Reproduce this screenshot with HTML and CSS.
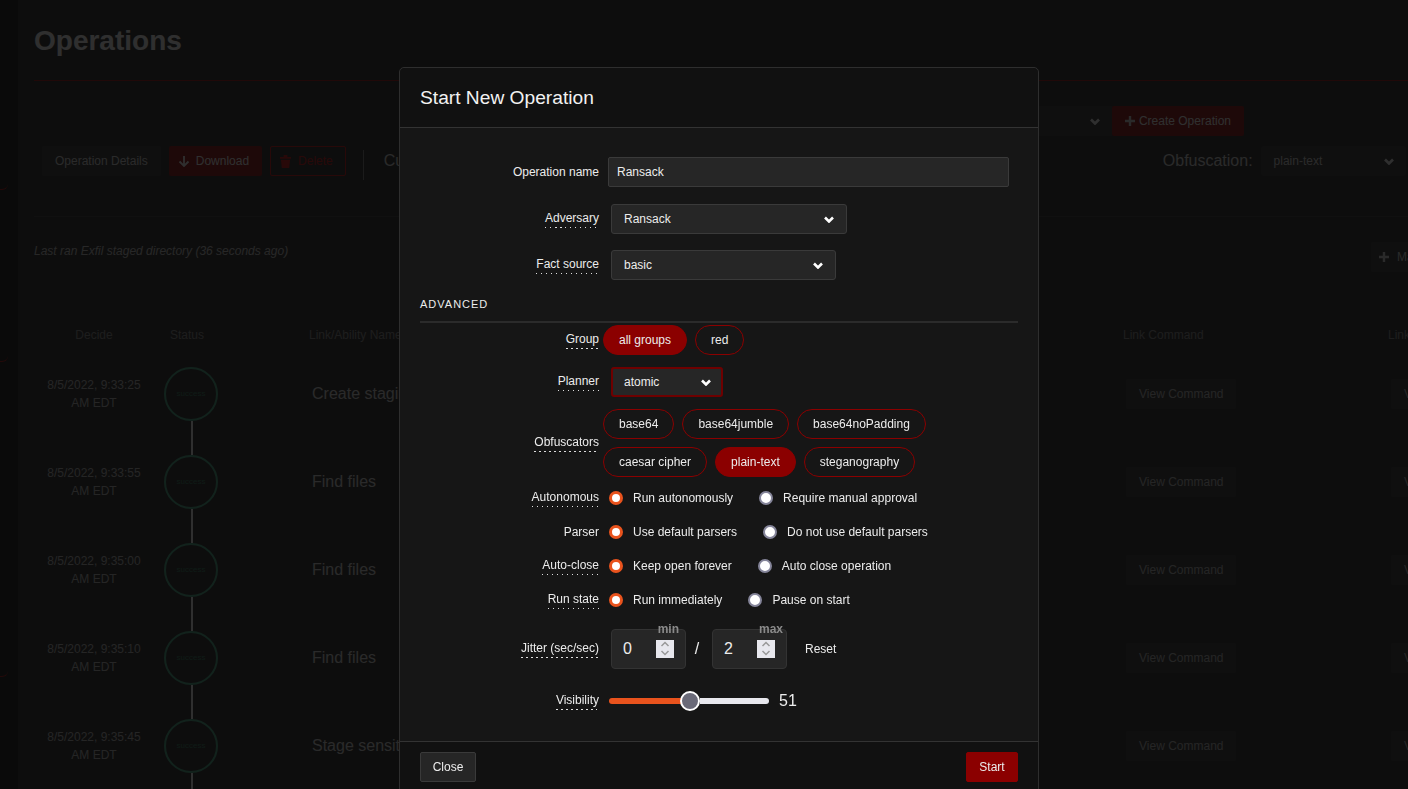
FILE: index.html
```html
<!DOCTYPE html>
<html>
<head>
    <title>Operations</title>
    <link rel="stylesheet" href="styles.css">
</head>
<body>
    <div class="page">
        <div class="sidebar">
            <div class="side-item side-a"></div>
            <div class="side-item side-b"></div>
            <div class="side-item side-c"></div>
        </div>
        <div class="main">
            <h1 class="page-title">Operations</h1>
            <div class="title-line"></div>
            <div class="top-row">
                <div class="bg-select op-select">
                    <span>Ransack - 8/5/2022</span>
                    <svg class="chev" viewBox="0 0 10 7"><path d="M1 1.5l4 4 4-4" /></svg>
                </div>
                <div class="bg-btn bg-red create-btn">
                    <svg class="plus" viewBox="0 0 10 10"><path d="M5 0v10M0 5h10" /></svg>
                    Create Operation
                </div>
            </div>
            <div class="tool-row">
                <div class="bg-btn">Operation Details</div>
                <div class="bg-btn bg-red download-btn">
                    <svg class="arrow" viewBox="0 0 12 12"><path d="M6 1v10M1.5 6.5L6 11l4.5-4.5" /></svg>
                    Download
                </div>
                <div class="bg-btn bg-outline">
                    <svg class="trash" viewBox="0 0 12 14"><path d="M0 2h4V0h4v2h4v2H0zM1 5h10l-1 9H2z" /></svg>
                    Delete
                </div>
                <div class="tool-sep"></div>
                <div class="current">Current state</div>
                <div class="obf">
                    <span class="obf-label">Obfuscation:</span>
                    <div class="bg-select obf-select">
                        <span>plain-text</span>
                        <svg class="chev" viewBox="0 0 10 7"><path d="M1 1.5l4 4 4-4" /></svg>
                    </div>
                </div>
            </div>
            <div class="soft-line"></div>
            <div class="status-row">
                <em class="last-ran">Last ran Exfil staged directory (36 seconds ago)</em>
                <div class="bg-btn manual-btn">
                    <svg class="plus" viewBox="0 0 10 10"><path d="M5 0v10M0 5h10" /></svg>
                    Manual Command
                </div>
            </div>
            <div class="tbl-head">
                <div class="center">Decide</div>
                <div class="status-head">Status</div>
                <div></div>
                <div>Link/Ability Name</div>
                <div>Link Command</div>
                <div>Link Output</div>
            </div>
            <div class="tbl-row">
                <div class="date">8/5/2022, 9:33:25<br>AM EDT</div>
                <div class="status-cell"><div class="circle">success</div><div class="connector"></div></div>
                <div></div>
                <div class="link-name">Create staging directory</div>
                <div class="cmd-cell"><div class="bg-btn">View Command</div></div>
                <div class="cmd-cell"><div class="bg-btn">View Output</div></div>
            </div>
            <div class="tbl-row">
                <div class="date">8/5/2022, 9:33:55<br>AM EDT</div>
                <div class="status-cell"><div class="circle">success</div><div class="connector"></div></div>
                <div></div>
                <div class="link-name">Find files</div>
                <div class="cmd-cell"><div class="bg-btn">View Command</div></div>
                <div class="cmd-cell"><div class="bg-btn">View Output</div></div>
            </div>
            <div class="tbl-row">
                <div class="date">8/5/2022, 9:35:00<br>AM EDT</div>
                <div class="status-cell"><div class="circle">success</div><div class="connector"></div></div>
                <div></div>
                <div class="link-name">Find files</div>
                <div class="cmd-cell"><div class="bg-btn">View Command</div></div>
                <div class="cmd-cell"><div class="bg-btn">View Output</div></div>
            </div>
            <div class="tbl-row">
                <div class="date">8/5/2022, 9:35:10<br>AM EDT</div>
                <div class="status-cell"><div class="circle">success</div><div class="connector"></div></div>
                <div></div>
                <div class="link-name">Find files</div>
                <div class="cmd-cell"><div class="bg-btn">View Command</div></div>
                <div class="cmd-cell"><div class="bg-btn">View Output</div></div>
            </div>
            <div class="tbl-row">
                <div class="date">8/5/2022, 9:35:45<br>AM EDT</div>
                <div class="status-cell"><div class="circle">success</div><div class="connector"></div></div>
                <div></div>
                <div class="link-name">Stage sensitive files</div>
                <div class="cmd-cell"><div class="bg-btn">View Command</div></div>
                <div class="cmd-cell"><div class="bg-btn">View Output</div></div>
            </div>
        </div>
    </div>

    <div class="backdrop"></div>

    <div class="modal">
        <div class="modal-head">Start New Operation</div>
        <div class="modal-body">
            <div class="field field-name">
                <div class="field-label"><span>Operation name</span></div>
                <div class="text-input">Ransack</div>
            </div>
            <div class="field field-adv">
                <div class="field-label"><span class="tip">Adversary</span></div>
                <div class="select select-adv">
                    <span>Ransack</span>
                    <svg class="chev" viewBox="0 0 10 7"><path d="M1 1.5l4 4 4-4" /></svg>
                </div>
            </div>
            <div class="field field-fact">
                <div class="field-label"><span class="tip">Fact source</span></div>
                <div class="select select-fact">
                    <span>basic</span>
                    <svg class="chev" viewBox="0 0 10 7"><path d="M1 1.5l4 4 4-4" /></svg>
                </div>
            </div>
            <div class="advanced">ADVANCED</div>
            <div class="advanced-line"></div>
            <div class="field field-group">
                <div class="field-label"><span class="tip">Group</span></div>
                <div class="pills">
                    <div class="pill pill-on">all groups</div>
                    <div class="pill">red</div>
                </div>
            </div>
            <div class="field field-planner">
                <div class="field-label"><span class="tip">Planner</span></div>
                <div class="select select-planner">
                    <span>atomic</span>
                    <svg class="chev" viewBox="0 0 10 7"><path d="M1 1.5l4 4 4-4" /></svg>
                </div>
            </div>
            <div class="field field-obf">
                <div class="field-label"><span class="tip">Obfuscators</span></div>
                <div class="pills pills-wrap">
                    <div class="pill">base64</div>
                    <div class="pill">base64jumble</div>
                    <div class="pill">base64noPadding</div>
                    <div class="pill">caesar cipher</div>
                    <div class="pill pill-on">plain-text</div>
                    <div class="pill">steganography</div>
                </div>
            </div>
            <div class="field field-radio field-auto">
                <div class="field-label"><span class="tip">Autonomous</span></div>
                <div class="radios">
                    <div class="radio-opt"><i class="radio radio-on"></i>Run autonomously</div>
                    <div class="radio-opt"><i class="radio"></i>Require manual approval</div>
                </div>
            </div>
            <div class="field field-radio">
                <div class="field-label"><span>Parser</span></div>
                <div class="radios">
                    <div class="radio-opt"><i class="radio radio-on"></i>Use default parsers</div>
                    <div class="radio-opt"><i class="radio"></i>Do not use default parsers</div>
                </div>
            </div>
            <div class="field field-radio">
                <div class="field-label"><span class="tip">Auto-close</span></div>
                <div class="radios">
                    <div class="radio-opt"><i class="radio radio-on"></i>Keep open forever</div>
                    <div class="radio-opt"><i class="radio"></i>Auto close operation</div>
                </div>
            </div>
            <div class="field field-radio">
                <div class="field-label"><span class="tip">Run state</span></div>
                <div class="radios">
                    <div class="radio-opt"><i class="radio radio-on"></i>Run immediately</div>
                    <div class="radio-opt"><i class="radio"></i>Pause on start</div>
                </div>
            </div>
            <div class="field field-jitter">
                <div class="field-label"><span class="tip">Jitter (sec/sec)</span></div>
                <div class="jitter">
                    <div class="num-box">
                        <span class="num-val">0</span>
                        <span class="num-tag">min</span>
                        <div class="spin">
                            <svg viewBox="0 0 18 18"><path d="M5.500 6L9 2.500 12.500 6M5.500 11L9 14.500 12.500 11" /></svg>
                        </div>
                    </div>
                    <span class="slash">/</span>
                    <div class="num-box">
                        <span class="num-val">2</span>
                        <span class="num-tag num-tag-max">max</span>
                        <div class="spin">
                            <svg viewBox="0 0 18 18"><path d="M5.500 6L9 2.500 12.500 6M5.500 11L9 14.500 12.500 11" /></svg>
                        </div>
                    </div>
                    <span class="reset">Reset</span>
                </div>
            </div>
            <div class="field field-vis">
                <div class="field-label"><span class="tip">Visibility</span></div>
                <div class="slider">
                    <div class="slider-fill"></div>
                    <div class="slider-thumb"></div>
                    <div class="slider-rest"></div>
                </div>
                <span class="slider-val">51</span>
            </div>
        </div>
        <div class="modal-foot">
            <div class="btn btn-close">Close</div>
            <div class="btn btn-start">Start</div>
        </div>
    </div>
</body>
</html>
```

FILE: styles.css
```css
* {
    margin: 0;
    padding: 0;
    box-sizing: border-box;
}

html, body {
    height: 100%;
    overflow: hidden;
}

body {
    background: #1f1f1f;
    color: #dbdbdb;
    font-family: "Liberation Sans", Arial, sans-serif;
    font-size: 12px;
}

/* page behind the modal */
.page {
    display: flex;
    height: 789px;
    overflow: hidden;
}

.sidebar {
    width: 18px;
    flex-shrink: 0;
    background: #0c0c0c;
}

.side-item {
    width: 8px;
    border-bottom: 1px solid #b00000;
    border-bottom-right-radius: 6px;
}

.side-a { height: 190px; }
.side-b { height: 172px; }
.side-c { height: 315px; }

.main {
    flex: 1;
    min-width: 0;
    padding: 25px 0 0 16px;
}

.page-title {
    font-size: 28px;
    line-height: 32px;
    font-weight: bold;
    color: #fff;
}

.title-line {
    height: 1px;
    margin-top: 23px;
    background: #a00000;
}

.top-row {
    display: flex;
    justify-content: flex-end;
    margin: 25px 164px 0 0;
    height: 30px;
}

.bg-select {
    display: flex;
    align-items: center;
    justify-content: space-between;
    height: 30px;
    padding: 0 12px 0 13px;
    background: #2b2b2b;
    border-radius: 3px;
    color: #dbdbdb;
}

.op-select {
    width: 320px;
    border-radius: 3px 0 0 3px;
}

.create-btn {
    border-radius: 0 3px 3px 0;
    padding: 0 14px 0 12px;
    gap: 4px;
}

.bg-btn {
    display: inline-flex;
    align-items: center;
    height: 30px;
    padding: 0 13px;
    background: #2b2b2b;
    border-radius: 2px;
    white-space: nowrap;
}

.bg-red {
    background: #8b0000;
    color: #fff;
}

.download-btn {
    padding-left: 9px;
}

.bg-outline {
    background: none;
    border: 1px solid #d00000;
    color: #d00000;
    padding: 0 12px 0 9px;
}

.tool-row {
    display: flex;
    align-items: center;
    gap: 8px;
    margin: 10px 0 0 8px;
    height: 30px;
}

.tool-row > * {
    flex-shrink: 0;
}

.tool-sep {
    width: 1px;
    height: 30px;
    margin: 8px 12px 0 9px;
    background: #777;
}

.current {
    font-size: 16px;
    width: 400px;
    white-space: nowrap;
}

.obf {
    display: flex;
    align-items: center;
    gap: 8px;
    margin-left: 371px;
}

.obf-label {
    font-size: 16px;
}

.obf-select {
    width: 145px;
}

.soft-line {
    height: 1px;
    margin-top: 40px;
    background: #333;
}

.status-row {
    display: flex;
    align-items: flex-start;
    justify-content: space-between;
    height: 30px;
    margin-top: 25px;
}

.last-ran {
    margin-top: 2px;
    line-height: 14px;
    color: #c8c8c8;
}

.manual-btn {
    flex-shrink: 0;
    gap: 8px;
    padding-left: 8px;
    margin-right: -100px;
}

.tbl-head, .tbl-row {
    display: grid;
    grid-template-columns: 120px 74px 81px 814px 265px 200px;
    width: 1554px;
}

.tbl-head {
    margin-top: 56px;
    line-height: 14px;
    color: #888;
}

.center { text-align: center; }
.status-head { padding-left: 16px; }

.tbl-row {
    height: 88px;
    color: #bbb;
}

.tbl-head + .tbl-row { margin-top: 25px; }

.date {
    height: 54px;
    padding-top: 9px;
    line-height: 18px;
    text-align: center;
}

.status-cell {
    display: flex;
    flex-direction: column;
    align-items: center;
    width: 54px;
    margin-left: 10px;
}

.circle {
    display: flex;
    align-items: center;
    justify-content: center;
    width: 54px;
    height: 54px;
    flex-shrink: 0;
    padding-bottom: 2px;
    border: 2px solid #3caa82;
    border-radius: 50%;
    font-size: 8px;
    color: #2a7a5c;
}

.connector {
    width: 2px;
    height: 34px;
    margin-left: 1px;
    background: #fff;
}

.link-name {
    display: flex;
    align-items: center;
    height: 54px;
    padding-left: 3px;
    font-size: 16px;
    color: #dbdbdb;
}

.cmd-cell {
    display: flex;
    align-items: center;
    height: 54px;
    padding-left: 3px;
}

.chev {
    width: 10px;
    height: 7px;
    fill: none;
    stroke: #fff;
    stroke-width: 2.600;
    flex-shrink: 0;
}

.plus {
    width: 10px;
    height: 10px;
    stroke: #dbdbdb;
    stroke-width: 2.400;
    flex-shrink: 0;
}

.arrow {
    width: 12px;
    height: 12px;
    margin-right: 6px;
    fill: none;
    stroke: #fff;
    stroke-width: 1.800;
}

.trash {
    width: 11px;
    height: 13px;
    margin-right: 7px;
    fill: #d00000;
}

.backdrop {
    position: fixed;
    inset: 0;
    background: rgba(10, 10, 10, 0.85);
}

/* modal */
.modal {
    position: fixed;
    top: 67px;
    left: 399px;
    width: 640px;
    height: 740px;
    display: flex;
    flex-direction: column;
    background: #161616;
    border: 1px solid #2e2e2e;
    border-radius: 5px;
    color: #ececec;
}

.modal-head {
    height: 60px;
    padding-left: 20px;
    background: #111;
    border-bottom: 1px solid #333;
    border-radius: 5px 5px 0 0;
    font-size: 19.200px;
    line-height: 59px;
    color: #f2f2f2;
}

.modal-body {
    height: 613px;
    padding: 29px 20px 0;
    flex-shrink: 0;
}

.modal-foot {
    display: flex;
    justify-content: space-between;
    flex: 1;
    padding: 10px 20px;
    background: #111;
    border-top: 1px solid #333;
}

.field {
    display: flex;
    align-items: center;
}

.field-label {
    width: 179px;
    flex-shrink: 0;
    text-align: right;
}

.field-label span {
    display: inline-block;
    line-height: 14px;
    padding-bottom: 1px;
}

/* the dotted hint line under a label */
.field-label .tip {
    padding-bottom: 3px;
    background: repeating-linear-gradient(to right, #ddd 0, #ddd 1.500px, transparent 1.500px, transparent 5px) left bottom / 100% 1px no-repeat;
}

.field-adv { margin-top: 17px; }
.field-fact { margin-top: 16px; }
.field-group { margin-top: 2px; }
.field-planner { margin-top: 12px; }
.field-obf { margin-top: 12px; }
.field-radio { margin-top: 14px; height: 20px; }
.field-auto { margin-top: 11px; }
.field-jitter { margin-top: 19px; }
.field-vis { margin-top: 22px; height: 20px; }

.text-input {
    width: 401px;
    height: 30px;
    margin-left: 9px;
    padding-left: 8px;
    background: #262626;
    border: 1px solid #3a3a3a;
    border-radius: 2px;
    line-height: 28px;
}

.select {
    display: flex;
    align-items: center;
    justify-content: space-between;
    height: 30px;
    margin-left: 12px;
    padding: 0 12px;
    background: #262626;
    border: 1px solid #3a3a3a;
    border-radius: 3px;
}

.select-adv { width: 236px; }
.select-fact { width: 225px; }

.select-planner {
    width: 112px;
    border: 2px solid #6e0000;
    padding: 0 10px 0 11px;
}

.advanced {
    margin-top: 17px;
    font-size: 11px;
    line-height: 14px;
    letter-spacing: 1px;
}

.advanced-line {
    height: 2px;
    margin-top: 10px;
    background: #2b2b2b;
}

.pills {
    display: flex;
    gap: 8px;
    margin-left: 4px;
}

.pills-wrap {
    flex-wrap: wrap;
    width: 340px;
}

.pill {
    height: 30px;
    padding: 0 15px;
    border: 1px solid #8b0000;
    border-radius: 15px;
    line-height: 28px;
}

.pill-on {
    background: #8b0000;
}

.radios {
    display: flex;
    gap: 26px;
    margin-left: 10px;
}

.radio-opt {
    display: flex;
    align-items: center;
    gap: 10px;
    line-height: 14px;
}

.radio {
    width: 14px;
    height: 14px;
    background: #fff;
    border: 2px solid #85859a;
    border-radius: 50%;
}

.radio-on {
    border: 3.500px solid #e9531d;
}

.jitter {
    display: flex;
    align-items: center;
    margin-left: 12px;
}

.num-box {
    position: relative;
    display: flex;
    align-items: center;
    justify-content: space-between;
    width: 75px;
    height: 40px;
    padding: 0 11px 0 11px;
    background: #262626;
    border: 1px solid #333;
    border-radius: 4px;
}

.num-val {
    font-size: 16px;
}

.num-tag {
    position: absolute;
    top: -8px;
    right: 6px;
    font-weight: bold;
    line-height: 14px;
    color: #8a8a8a;
}

.num-tag-max {
    right: 3px;
}

.spin {
    width: 18px;
    height: 18px;
    background: #e8e8ee;
}

.spin svg {
    display: block;
    fill: none;
    stroke: #999;
    stroke-width: 1.500;
}

.slash {
    width: 26px;
    padding-right: 4px;
    text-align: center;
    font-size: 16px;
}

.reset {
    margin-left: 18px;
}

.slider {
    display: flex;
    align-items: center;
    width: 160px;
    margin-left: 10px;
}

.slider-fill {
    width: 81px;
    height: 6px;
    background: #e9531d;
    border-radius: 3px 0 0 3px;
}

.slider-thumb {
    width: 20px;
    height: 20px;
    margin-left: -10px;
    flex-shrink: 0;
    background: #6a6a78;
    border: 2px solid #fff;
    border-radius: 50%;
}

.slider-rest {
    flex: 1;
    height: 6px;
    background: #e8e8ee;
    border-radius: 0 3px 3px 0;
}

.slider-val {
    margin-left: 10px;
    font-size: 16px;
}

.btn {
    height: 30px;
    background: #262626;
    border: 1px solid #3a3a3a;
    border-radius: 2px;
    line-height: 28px;
    text-align: center;
}

.btn-close {
    width: 56px;
}

.btn-start {
    width: 52px;
    background: #8b0000;
    border-color: #8b0000;
}
```
